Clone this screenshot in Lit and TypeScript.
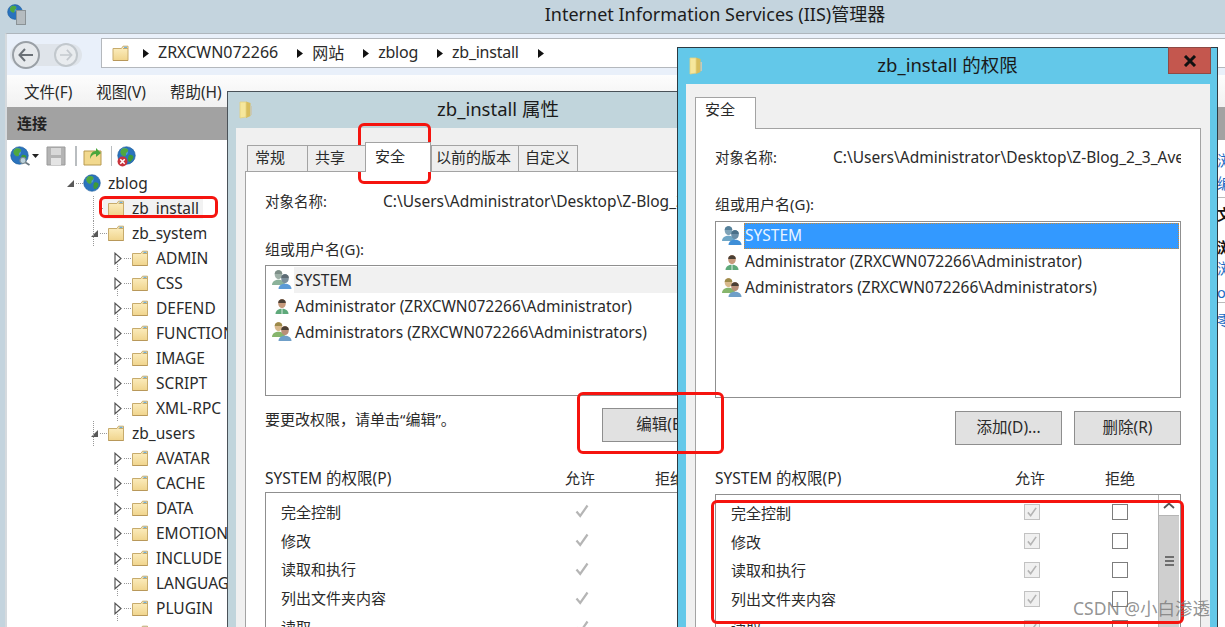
import { LitElement, html, css, svg } from "lit";
import { customElement } from "lit/decorators.js";

const folder = (w = 18, h = 17) => html`<svg class="ico" width=${w} height=${h} viewBox="0 0 18 17">
  <defs><linearGradient id="fg" x1="0" y1="0" x2="0" y2="1"><stop offset="0" stop-color="#fdf0c4"/><stop offset="1" stop-color="#f0d48c"/></linearGradient></defs>
  <path d="M1.5 3.5H10L11.5 1.2H16.5V15.5H1.5Z" fill="url(#fg)" stroke="#c7ab6c" stroke-width="1"/>
  <path d="M11.5 3.5H16.5" stroke="#c7ab6c"/><rect x="12.5" y="1.8" width="3" height="1.2" fill="#6fb1e0"/>
  <path d="M1.5 15.5H16.5" stroke="#b8985a" stroke-width="1"/>
</svg>`;

const sideFolder = () => html`<svg class="ico" width="16" height="20" viewBox="0 0 16 20">
  <path d="M2 2H8V17L2 18Z" fill="#f6e79c"/><path d="M8 1.5L12.5 3V16L8 18Z" fill="#d8bd5c"/>
  <path d="M2 2H8V17L2 18Z" fill="none" stroke="#e6d27e" stroke-width=".8"/>
  <path d="M12.5 6H14V15H12.5Z" fill="#c8c8b8"/>
</svg>`;

const globe = (s = 18) => html`<svg class="ico" width=${s} height=${s} viewBox="0 0 18 18">
  <circle cx="9" cy="9" r="8.3" fill="#2a73bd" stroke="#1a5a9a" stroke-width=".6"/>
  <circle cx="7" cy="5.5" r="3.5" fill="#5ea8e2" opacity=".7"/>
  <path d="M5 2.5C8 1.5 11 2.5 10.5 4.5S8 6 8.5 8 6 10.5 4.5 8.5 2.5 5 5 2.5Z" fill="#4fa83f"/>
  <path d="M11.5 8.5C13.5 8 16 9 15.5 11S13 15.5 11.5 15 10 10 11.5 8.5Z" fill="#3f9a38"/>
</svg>`;

const person = (x: number, y: number, skin: string, shirt: string, hair: string) => svg`
  <path d="M${x - 6.5} ${y + 15}C${x - 6.5} ${y + 8} ${x + 6.5} ${y + 8} ${x + 6.5} ${y + 15}Z" fill=${shirt}/>
  <ellipse cx=${x} cy=${y + 4.6} rx="3.8" ry="4.6" fill=${skin}/>
  <path d="M${x - 3.8} ${y + 4}C${x - 4} ${y - 1} ${x + 4} ${y - 1} ${x + 3.8} ${y + 4}Z" fill=${hair}/>`;

const userIcon = (kind: string) => {
  if (kind === "single")
    return html`<svg class="ico" width="20" height="20" viewBox="0 0 20 20">${person(10, 3, "#c79a7c", "#5ea97a", "#4a3f35")}<path d="M10 12V18" stroke="#fff" stroke-width=".8"/></svg>`;
  if (kind === "system")
    return html`<svg class="ico" width="20" height="20" viewBox="0 0 20 20">${person(6.5, 0, "#9fb1a8", "#8bb29a", "#7e8f88")}${person(13, 4, "#7b8f9b", "#5b9ad6", "#5d6b74")}</svg>`;
  if (kind === "systemSel")
    return html`<svg class="ico" width="20" height="20" viewBox="0 0 20 20">${person(6.5, 0, "#7fa3b8", "#6fa6c6", "#55809a")}${person(13, 4, "#6a8ea8", "#3f8fd8", "#4a6f88")}</svg>`;
  return html`<svg class="ico" width="20" height="20" viewBox="0 0 20 20">${person(6.5, 0, "#d8b98c", "#86b56c", "#9c8a4a")}${person(13, 4, "#b98f78", "#6f9fc8", "#4a3f35")}</svg>`;
};

const expanded = () => html`<svg width="9" height="9" viewBox="0 0 9 9"><path d="M8 1V8H1Z" fill="#595959"/></svg>`;
const collapsed = () => html`<svg width="8" height="13" viewBox="0 0 8 13"><path d="M1 1.2L7 6.5L1 11.8Z" fill="#fff" stroke="#555" stroke-width="1.2"/></svg>`;
const crumbArrow = () => html`<svg class="ico" width="6" height="9" viewBox="0 0 6 9"><path d="M0 0L6 4.5L0 9Z" fill="#111"/></svg>`;
const check = (c: string) => html`<svg class="ico" width="16" height="16" viewBox="0 0 16 16"><path d="M2.5 8.5L6.2 13L13.5 2.5" fill="none" stroke=${c} stroke-width="2.2"/></svg>`;

const treeRows: [number, string, string][] = [
  [0, "open", "zblog"], [1, "none", "zb_install"], [1, "open", "zb_system"],
  [2, "shut", "ADMIN"], [2, "shut", "CSS"], [2, "shut", "DEFEND"], [2, "shut", "FUNCTION"],
  [2, "shut", "IMAGE"], [2, "shut", "SCRIPT"], [2, "shut", "XML-RPC"], [1, "open", "zb_users"],
  [2, "shut", "AVATAR"], [2, "shut", "CACHE"], [2, "shut", "DATA"], [2, "shut", "EMOTION"],
  [2, "shut", "INCLUDE"], [2, "shut", "LANGUAGE"], [2, "shut", "PLUGIN"], [2, "shut", "THEME"],
];
const perms = ["完全控制", "修改", "读取和执行", "列出文件夹内容", "读取"];
const users = ["Administrator (ZRXCWN072266\\Administrator)", "Administrators (ZRXCWN072266\\Administrators)"];
const tabs: [string, number, number][] = [["常规", 60, 7], ["共享", 58, 7], ["安全", 66, 9], ["以前的版本", 87, 4], ["自定义", 60, 6]];
const rightItems: [string, string][] = [["浏览", "lnk r1"], ["编辑权限...", "lnk r2"], ["文件夹", "bold r3"], ["浏览网站", "bold r4"], ["浏览 zblog", "lnk r5"], ["on *:80 (http)", "lnk r6"], ["零", "lnk r7"]];

@customElement("app-root")
export class AppRoot extends LitElement {
  static styles = css`
    :host { display: block; position: relative; width: 1225px; height: 627px; overflow: hidden; background: #c4d4de;
      font-family: "Noto Sans", "Noto Sans CJK SC", sans-serif; font-size: 15px; color: #2a2a2a; }
    .ico { display: block; flex: none; }
    .top { height: 33px; display: flex; align-items: center; }
    .top-ico { margin-left: 7px; width: 20px; height: 20px; position: relative; flex: none; display: flex; margin-bottom: 6px; }
    .server { width: 8px; height: 13px; background: #b5bcc0; border: 1px solid #8a9296; margin: 6px 0 0 -7px; }
    .top-title { margin-left: 178px; flex: 1; text-align: center; font-size: 18px; color: #1c1c1c; padding-bottom: 7px; }
    .main { margin-left: 5px; height: 594px; border-left: 2px solid #d5dade; border-top: 1px solid #aeb6bd; display: flex; flex-direction: column; }
    .nav { height: 41px; background: #e9f0fa; display: flex; flex: none; }
    .navbtns { width: 94px; flex: none; }
    .pill { margin: 10px 0 0 3px; width: 72px; height: 22px; border-radius: 11px; background: #dfe4ea; position: relative; }
    .addr { flex: 1; height: 30px; margin-top: 4px; background: #fff; border: 1px solid #b4b8bd; border-right: 0; display: flex; align-items: center; padding: 0 0 0 9px; font-size: 16px; box-sizing: border-box; }
    .addr span { margin: 0 19px 0 9px; white-space: nowrap; padding-bottom: 3px; }
    .addr .seg { letter-spacing: -.25px; }
    .addr .arr0 { margin-left: 13px; }
    .round { position: absolute; top: -3px; width: 28px; height: 28px; border-radius: 50%; background: #e6e9ec; border: 2px solid #9aa0a6; box-sizing: border-box; display: flex; align-items: center; justify-content: center; }
    .round.fwd { left: 44px; border: 2px solid #c2c8cd; width: 24px; height: 24px; top: -1px; background: #e9ecef; }
    .round.back { left: 2px; }
    .menu { height: 32px; flex: none; display: flex; align-items: center; gap: 24px; padding-left: 17px; background: linear-gradient(#fdfdfd, #f1f1f1); font-size: 15.5px; }
    .body { flex: 1; display: flex; min-height: 0; }
    .head { height: 33px; background: #a2a2a2; flex: none; display: flex; align-items: center; padding: 0 0 2px 10px; box-sizing: border-box; font-weight: 700; font-size: 15px; color: #222; }
    .left { width: 221px; flex: none; display: flex; flex-direction: column; background: #fff; overflow: hidden; }
    .tools { height: 30px; flex: none; display: flex; align-items: center; padding: 2px 0 0 3px; box-sizing: border-box; background: #fff; }
    .mag { position: relative; width: 20px; height: 20px; flex: none; }
    .mag svg.m { position: absolute; left: 9px; top: 11px; }
    .sep { width: 1.5px; height: 20px; background: #b9bdc0; flex: none; }
    .tree { flex: 1; overflow: hidden; padding-top: .5px; }
    .row { height: 25px; display: flex; align-items: center; position: relative; white-space: nowrap; font-size: 15.5px; }
    .l0 { padding-left: 57px; } .l1 { padding-left: 81px; } .l2 { padding-left: 105px; }
    .exp { width: 12px; height: 14px; flex: none; display: flex; align-items: center; justify-content: center; }
    .dash { width: 7px; flex: none; border-top: 1px dotted #999; }
    .item { display: flex; align-items: center; gap: 7px; height: 22px; }
    .item.sel { background: #f2f2f2; padding-right: 4px; margin-left: -4px; padding-left: 4px; }
    .row.l2::after { content: ""; position: absolute; left: 110px; top: 18px; height: 7px; border-left: 1px dotted #999; }
    .row.l1::before { content: ""; position: absolute; left: 86px; top: 0; height: 25px; border-left: 1px dotted #999; }
    .mid { flex: 1; display: flex; flex-direction: column; background: #fff; }
    .right { width: 8px; flex: none; display: flex; flex-direction: column; overflow: hidden; background: #fff; white-space: nowrap; font-size: 14.5px; }
    .right div.rt { height: 20px; line-height: 20px; }
    .lnk { color: #1c6cc4; } .bold { font-weight: 700; color: #111; }
    .r1 { margin-top: 10px; } .r2 { margin-top: 3px; padding-bottom: 4px; border-bottom: 1px solid #bbb; }
    .r3 { margin-top: 6px; } .r4 { margin-top: 13px; } .r5 { margin-top: 1px; } .r6 { margin-top: 4px; padding-bottom: 0; border-bottom: 1px solid #bbb; } .r7 { margin-top: 7px; }

    .dlg { position: absolute; width: 541px; height: 640px; box-sizing: border-box; border: 1px solid #4a5258; display: flex; flex-direction: column; }
    .d1 { left: 227px; top: 91px; background: #c1d5dc; border-right: 0; }
    .d2 { left: 677px; top: 47px; background: #63c8e9; border-color: #2c3a42; }
    .dtitle { height: 36px; flex: none; display: flex; align-items: center; justify-content: center; font-size: 18.5px; color: #1a1a1a; position: relative; padding-bottom: 4px; box-sizing: border-box; }
    .dtitle .ico { position: absolute; left: 10px; top: 8px; }
    .close { position: absolute; right: 6px; top: -1px; width: 43px; height: 27px; background: #c4574e; border: 1px solid #8f4a45; box-sizing: border-box; display: flex; align-items: center; justify-content: center; }
    .content { flex: 1; margin: 0 7px 0 8px; background: #f0f0f0; padding: 14px 9px 0; min-height: 0; }
    .d2 .content { padding-top: 13px; }
    .tabs { display: flex; align-items: flex-end; padding-left: 2px; margin-bottom: -1px; position: relative; z-index: 1; }
    .d2 .tabs { padding-left: 0; }
    .tab { height: 27px; box-sizing: border-box; border: 1px solid #a3a3a3; border-right: 0; background: #eee; line-height: 22px; white-space: nowrap; font-size: 15px; }
    .tab.on { height: 30px; line-height: 26px; background: #fff; border-right: 1px solid #a3a3a3; border-bottom: 0; }
    .tab.last { border-right: 1px solid #a3a3a3; }
    .d2 .tab.on { height: 32px; line-height: 23px; }
    .panel { background: #fff; border: 1px solid #a3a3a3; padding: 0 19px; height: 600px; }
    .d1 .panel { padding-top: 19px; } .d2 .panel { padding-top: 18px; }
    .lbl { height: 20px; line-height: 20px; white-space: nowrap; }
    .obj { display: flex; }
    .obj b { font-weight: 400; width: 118px; flex: none; font-size: 14.5px; }
    .objv { width: 349px; overflow: hidden; font-size: 15.5px; }
    .glbl { margin-top: 28px; }
    .d2 .glbl { margin-top: 27px; }
    .ulist { border: 1px solid #8f8f8f; box-sizing: border-box; margin-top: 6px; padding: 1px 1px 0 1px; width: 466px; }
    .d1 .ulist { height: 131px; } .d2 .ulist { height: 177px; margin-top: 7px; }
    .urow { height: 26px; display: flex; align-items: center; white-space: nowrap; padding-left: 5px; gap: 2px; font-size: 15.5px; }
    .urow .t { flex: 1; height: 26px; line-height: 26px; padding-left: 1px; }
    .d2 .urow .t { line-height: 25px; }
    .d1 .urow.first .t { background: #f1f1f1; }
    .d2 .urow.first .t { background: #3399ff; color: #e8f4ff; outline: 1px dotted #c98a3a; outline-offset: -1px; }
    .act { display: flex; align-items: flex-start; justify-content: space-between; height: 34px; margin-top: 12px; }
    .hint { line-height: 20px; margin-top: 1px; }
    .d2 .act { margin-top: 13px; justify-content: flex-end; gap: 12px; }
    .btn { height: 34px; box-sizing: border-box; background: #e1e1e1; border: 1px solid #8e8e8e; display: flex; align-items: center; justify-content: center; width: 107px; white-space: nowrap; font-size: 15.5px; padding-bottom: 3px; }
    .btn.edit { width: 130px; }
    .plbl { display: grid; grid-template-columns: 303px 24px 66px 24px; height: 20px; line-height: 20px; margin-top: 26px; white-space: nowrap; font-size: 15.5px; }
    .d2 .plbl { margin-top: 23px; }
    .plbl span.c { display: flex; justify-content: center; font-size: 15px; }
    .plist { border: 1px solid #8f8f8f; box-sizing: border-box; height: 200px; width: 466px; margin-top: 4px; display: flex; }
    .d2 .plist { margin-top: 6px; }
    .prows { flex: 1; padding-top: 4px; }
    .d2 .prows { padding-top: 3px; }
    .prow { display: grid; grid-template-columns: 289px 24px 64px 24px; height: 28.8px; align-items: center; padding-left: 15px; white-space: nowrap; font-size: 15px; }
    .prow .c { display: flex; justify-content: center; }
    .cb { width: 16px; height: 16px; box-sizing: border-box; flex: none; border: 1px solid #7d7d7d; background: #fff; display: flex; align-items: center; justify-content: center; }
    .cb.off { border-color: #c2c2c2; background: #f0f0f0; }
    .cb .ico { width: 12px; height: 12px; }
    .sb { width: 20px; flex: none; display: flex; flex-direction: column; background: #cfcfcf; border-left: 1px solid #b5b5b5; margin-right: 1px; }
    .sb-up { height: 20px; background: #fff; display: flex; align-items: center; justify-content: center; border-bottom: 1px solid #b5b5b5; }
    .sb-grip { display: flex; flex-direction: column; gap: 2px; margin: 40px auto 0; }
    .sb-grip i { display: block; width: 9px; height: 2px; background: #6e6e6e; }
    .red { position: absolute; box-sizing: border-box; border: 3px solid #f5140f; border-radius: 6px; }
    .r-a { left: 99px; top: 196px; width: 119px; height: 22px; }
    .r-b { left: 358px; top: 123px; width: 73px; height: 61px; }
    .r-c { left: 577px; top: 392px; width: 147px; height: 62px; }
    .r-d { left: 711px; top: 500px; width: 473px; height: 124px; }
    .mark { position: absolute; left: 1073px; top: 595px; font-size: 17.5px; color: rgba(120,120,120,.8); white-space: nowrap; }
  `;

  private permRows(boxed: boolean) {
    return perms.map((p) => html`<div class="prow"><span>${p}</span>
      <span class="c">${boxed ? html`<span class="cb off">${check("#b4b4b4")}</span>` : check("#b5b5b5")}</span>
      <span></span>
      <span class="c">${boxed ? html`<span class="cb"></span>` : ""}</span></div>`);
  }

  private userRows(first: string) {
    return html`<div class="urow first">${userIcon(first)}<span class="t">SYSTEM</span></div>
      <div class="urow">${userIcon("single")}<span class="t">${users[0]}</span></div>
      <div class="urow">${userIcon("group")}<span class="t">${users[1]}</span></div>`;
  }

  render() {
    return html`
      <div class="top">
        <div class="top-ico">${globe(16)}<div class="server"></div></div>
        <div class="top-title">Internet Information Services (IIS)管理器</div>
      </div>
      <div class="main">
        <div class="nav">
          <div class="navbtns"><div class="pill">
            <div class="round back"><svg width="16" height="14" viewBox="0 0 16 14"><path d="M7 1L1.5 7L7 13M2 7H15" fill="none" stroke="#6a7076" stroke-width="2"/></svg></div>
            <div class="round fwd"><svg width="14" height="12" viewBox="0 0 16 14"><path d="M9 1L14.5 7L9 13M14 7H1" fill="none" stroke="#c4c9ce" stroke-width="2"/></svg></div>
          </div></div>
          <div class="addr">${folder(19, 17)}<svg class="ico arr0" width="6" height="9" viewBox="0 0 6 9"><path d="M0 0L6 4.5L0 9Z" fill="#111"/></svg>
            <span>ZRXCWN072266</span>${crumbArrow()}<span>网站</span>${crumbArrow()}<span class="seg">zblog</span>${crumbArrow()}<span class="seg">zb_install</span>${crumbArrow()}</div>
        </div>
        <div class="menu"><span>文件(F)</span><span>视图(V)</span><span>帮助(H)</span></div>
        <div class="body">
          <div class="left">
            <div class="head">连接</div>
            <div class="tools">
              <div class="mag">${globe(19)}<svg class="m" width="11" height="9" viewBox="0 0 11 9"><circle cx="4" cy="3.5" r="3" fill="#bcd2dc" stroke="#7b8b93" stroke-width="1.2"/><path d="M6.5 5.5L10.5 8" stroke="#6a7880" stroke-width="1.8"/></svg></div>
              <svg class="ico" style="margin:0 7px 0 2px" width="7" height="4" viewBox="0 0 7 4"><path d="M0 0H7L3.5 4Z" fill="#222"/></svg>
              <svg class="ico" width="20" height="20" viewBox="0 0 20 20"><path d="M1 1H19V19H1Z" fill="#b4b4b4" stroke="#9a9a9a"/><rect x="5" y="2" width="10" height="7" fill="#d8d8d8"/><rect x="5" y="12" width="10" height="7" fill="#e4e4e4"/></svg>
              <span class="sep" style="margin:0 6px 0 9px"></span>
              <svg class="ico" width="19" height="20" viewBox="0 0 19 20"><path d="M1 5H18V19H1Z" fill="#f2d98e" stroke="#b89a50"/><path d="M7 13C7 8 9 5 13 5V2L18 7L13 11V8C10 8 8 10 7 13Z" fill="#4aa63c"/></svg>
              <span class="sep" style="margin:0 5px 0 9px"></span>
              <div class="mag">${globe(19)}<svg style="position:absolute;left:0;top:10px" width="11" height="11" viewBox="0 0 10 10"><circle cx="5" cy="5" r="4.5" fill="#c8323c"/><path d="M3 3L7 7M7 3L3 7" stroke="#fff" stroke-width="1.4"/></svg></div>
            </div>
            <div class="tree">
              ${treeRows.map(([lv, st, name]) => html`<div class="row l${lv}">
                <span class="exp">${st === "open" ? expanded() : st === "shut" ? collapsed() : ""}</span>
                <span class="dash"></span>
                <span class="item ${name === "zb_install" ? "sel" : ""}">${lv === 0 ? globe(18) : folder()}<span>${name}</span></span>
              </div>`)}
            </div>
          </div>
          <div class="mid"><div class="head"></div></div>
          <div class="right"><div class="head"></div>
            ${rightItems.map(([t, c]) => html`<div class="rt ${c}">${t}</div>`)}
          </div>
        </div>
      </div>

      <div class="dlg d1">
        <div class="dtitle">${sideFolder()}zb_install 属性</div>
        <div class="content">
          <div class="tabs">${tabs.map(([t, w, p], i) => html`<div class="tab ${i === 2 ? "on" : ""} ${i === 4 ? "last" : ""}" style="width:${w}px;padding-left:${p}px">${t}</div>`)}</div>
          <div class="panel">
            <div class="lbl obj"><b>对象名称:</b><span class="objv">C:\\Users\\Administrator\\Desktop\\Z-Blog_2_3_Avenger</span></div>
            <div class="lbl glbl">组或用户名(G):</div>
            <div class="ulist">${this.userRows("system")}</div>
            <div class="act"><span class="hint">要更改权限，请单击“编辑”。</span><span class="btn edit">编辑(E)...</span></div>
            <div class="plbl"><span>SYSTEM 的权限(P)</span><span class="c">允许</span><span></span><span class="c">拒绝</span></div>
            <div class="plist"><div class="prows">${this.permRows(false)}</div></div>
          </div>
        </div>
      </div>

      <div class="dlg d2">
        <div class="dtitle">${sideFolder()}zb_install 的权限
          <div class="close"><svg width="14" height="12" viewBox="0 0 14 12"><path d="M2 1L12 11M12 1L2 11" stroke="#111" stroke-width="3"/></svg></div>
        </div>
        <div class="content">
          <div class="tabs"><div class="tab on" style="width:61px;padding-left:9px">安全</div></div>
          <div class="panel">
            <div class="lbl obj"><b>对象名称:</b><span class="objv">C:\\Users\\Administrator\\Desktop\\Z-Blog_2_3_Avenger</span></div>
            <div class="lbl glbl">组或用户名(G):</div>
            <div class="ulist">${this.userRows("systemSel")}</div>
            <div class="act"><span class="btn">添加(D)...</span><span class="btn">删除(R)</span></div>
            <div class="plbl"><span>SYSTEM 的权限(P)</span><span class="c">允许</span><span></span><span class="c">拒绝</span></div>
            <div class="plist"><div class="prows">${this.permRows(true)}</div>
              <div class="sb"><div class="sb-up"><svg width="12" height="7" viewBox="0 0 12 7"><path d="M1 6L6 1.5L11 6" fill="none" stroke="#555" stroke-width="1.8"/></svg></div>
                <div class="sb-grip"><i></i><i></i><i></i></div></div>
            </div>
          </div>
        </div>
      </div>

      <div class="red r-a"></div><div class="red r-b"></div><div class="red r-c"></div><div class="red r-d"></div>
      <div class="mark">CSDN @小白渗透</div>
    `;
  }
}
